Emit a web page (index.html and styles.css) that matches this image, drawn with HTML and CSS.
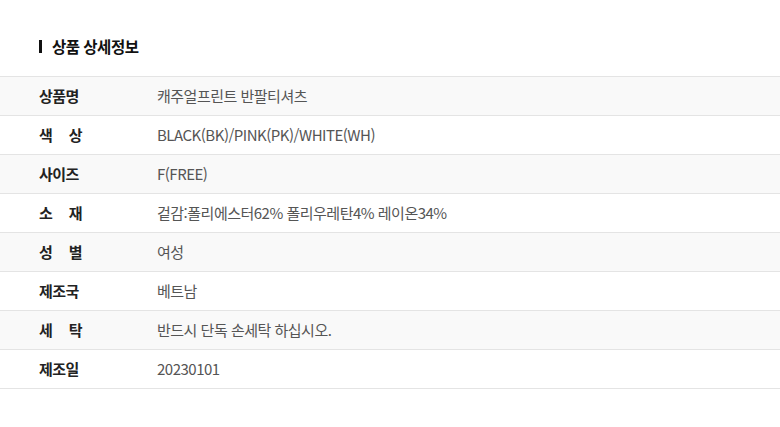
FILE: index.html
```html
<!DOCTYPE html>
<html lang="ko">
<head>
<meta charset="utf-8">
<link rel="stylesheet" href="styles.css">
</head>
<body>
<section class="detail">
  <h2 class="title"><span class="bar"></span>상품 상세정보</h2>
  <div class="table">
    <div class="row odd"><span class="label">상품명</span><span class="value">캐주얼프린트 반팔티셔츠</span></div>
    <div class="row"><span class="label spaced">색 상</span><span class="value">BLACK(BK)/PINK(PK)/WHITE(WH)</span></div>
    <div class="row odd"><span class="label">사이즈</span><span class="value">F(FREE)</span></div>
    <div class="row"><span class="label spaced">소 재</span><span class="value">겉감:폴리에스터62% 폴리우레탄4% 레이온34%</span></div>
    <div class="row odd"><span class="label spaced">성 별</span><span class="value">여성</span></div>
    <div class="row"><span class="label">제조국</span><span class="value">베트남</span></div>
    <div class="row odd"><span class="label spaced">세 탁</span><span class="value">반드시 단독 손세탁 하십시오.</span></div>
    <div class="row"><span class="label">제조일</span><span class="value">20230101</span></div>
  </div>
</section>
</body>
</html>
```
FILE: styles.css
```css
html, body {
  margin: 0;
  padding: 0;
  background: #fff;
}
body {
  font-family: "Noto Sans CJK KR", "Noto Sans", sans-serif;
  letter-spacing: -0.5px;
}
.detail {
  padding-top: 35px;
}
.title {
  margin: 0 0 0 39px;
  height: 41px;
  display: flex;
  align-items: flex-start;
  font-size: 15.5px;
  font-weight: 700;
  color: #111;
  line-height: 22px;
  letter-spacing: -0.5px;
}
.bar {
  width: 3px;
  height: 13px;
  background: #111;
  margin-top: 5px;
  margin-right: 10px;
}
.table {
  border-top: 1px solid #e4e4e4;
}
.row {
  display: flex;
  align-items: center;
  height: 38px;
  border-bottom: 1px solid #e4e4e4;
  padding-left: 39px;
  font-size: 15px;
  line-height: 22px;
}
.row.odd {
  background: #f9f9f9;
}
.label {
  width: 43px;
  margin-right: 75px;
  font-weight: 700;
  color: #222;
}
.label.spaced {
  text-align: justify;
  text-align-last: justify;
}
.value {
  color: #555;
}
```
